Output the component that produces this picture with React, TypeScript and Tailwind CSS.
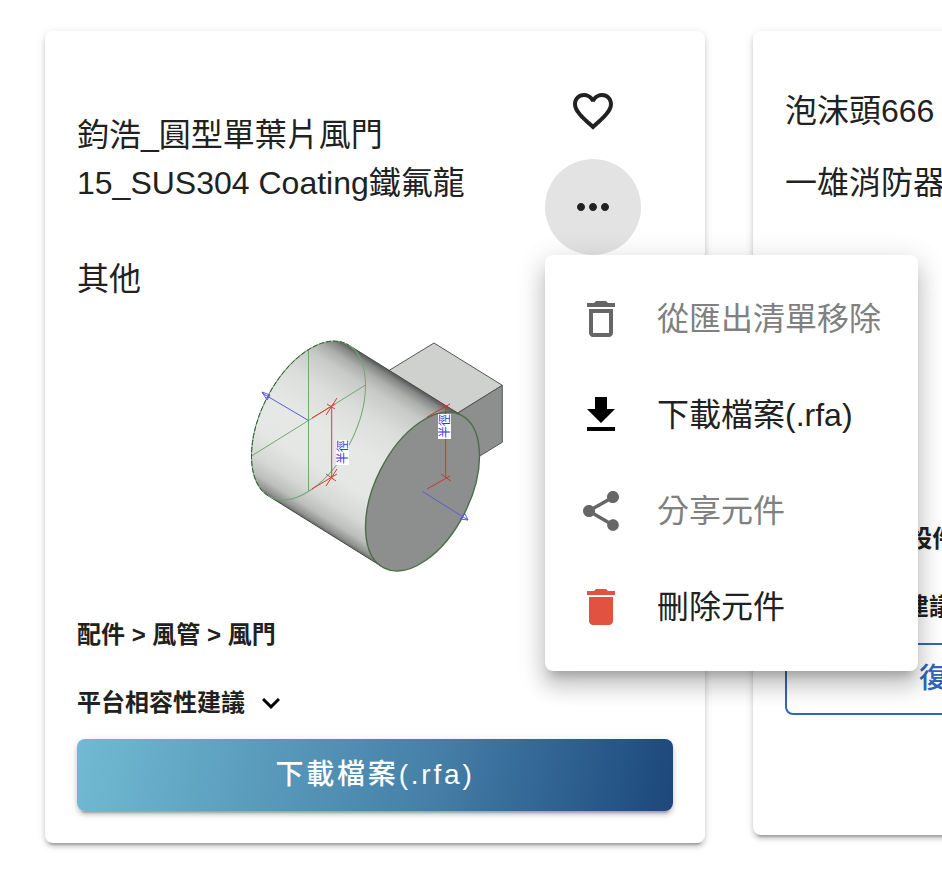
import type { ReactNode } from 'react'
import {
  MdDelete,
  MdExpandMore,
  MdFavoriteBorder,
  MdMoreHoriz,
  MdShare,
} from 'react-icons/md'

const CARD_SHADOW =
  'shadow-[0_6px_2px_-4px_rgba(0,0,0,0.2),0_4px_4px_0_rgba(0,0,0,0.14),0_2px_10px_0_rgba(0,0,0,0.12)]'
const MENU_SHADOW =
  'shadow-[0_10px_10px_-6px_rgba(0,0,0,0.2),0_16px_20px_2px_rgba(0,0,0,0.14),0_6px_28px_4px_rgba(0,0,0,0.12)]'

function DeleteOutlineIcon() {
  return (
    <svg viewBox="0 0 24 24" className="size-12 fill-current" aria-hidden="true">
      <path d="M6 19c0 1.1.9 2 2 2h8c1.1 0 2-.9 2-2V7H6v12zM8 9h8v10H8V9zm7.5-5l-1-1h-5l-1 1H5v2h14V4h-3.5z" />
    </svg>
  )
}

function DownloadIcon() {
  return (
    <svg viewBox="0 0 24 24" className="size-12 fill-current" aria-hidden="true">
      <path d="M19 9h-4V3H9v6H5l7 7 7-7zM5 18v2h14v-2H5z" />
    </svg>
  )
}

interface MenuItemProps {
  icon: ReactNode
  label: string
  iconColor: string
  disabled?: boolean
}

function MenuItem({ icon, label, iconColor, disabled = false }: MenuItemProps) {
  return (
    <button
      type="button"
      role="menuitem"
      disabled={disabled}
      className="flex h-24 w-full items-center gap-8 px-8 text-left text-[32px] leading-[48px] whitespace-nowrap"
    >
      <span className={iconColor}>{icon}</span>
      <span className={disabled ? 'text-[#808080]' : 'text-[#212121]'}>{label}</span>
    </button>
  )
}

function ComponentMenu() {
  return (
    <div
      role="menu"
      className={`absolute top-full left-0 z-10 w-[373px] rounded-lg bg-white py-4 ${MENU_SHADOW}`}
    >
      <MenuItem icon={<DeleteOutlineIcon />} label="從匯出清單移除" iconColor="text-[#666666]" disabled />
      <MenuItem icon={<DownloadIcon />} label="下載檔案(.rfa)" iconColor="text-black" />
      <MenuItem icon={<MdShare className="size-12" />} label="分享元件" iconColor="text-[#666666]" disabled />
      <MenuItem icon={<MdDelete className="size-12" />} label="刪除元件" iconColor="text-[#e25241]" />
    </div>
  )
}

// Round damper: a cylinder seen in isometric view with its actuator box behind it
function DamperPreview() {
  return (
    <svg viewBox="225 327 300 258" className="h-[258px] w-[300px]" role="img" aria-label="圓型單葉片風門">
      <defs>
        <linearGradient id="barrel" gradientUnits="userSpaceOnUse" x1="348.6" y1="345.2" x2="258.4" y2="490">
          <stop offset="0" stopColor="#565857" />
          <stop offset="0.03" stopColor="#858786" />
          <stop offset="0.08" stopColor="#adafad" />
          <stop offset="0.15" stopColor="#c8cac8" />
          <stop offset="0.3" stopColor="#dbdedb" />
          <stop offset="0.5" stopColor="#e5e8e5" />
          <stop offset="0.7" stopColor="#e4e7e4" />
          <stop offset="0.84" stopColor="#d6d8d6" />
          <stop offset="0.93" stopColor="#bcbebc" />
          <stop offset="0.98" stopColor="#8f918f" />
          <stop offset="1" stopColor="#666866" />
        </linearGradient>
      </defs>

      <g stroke="#555756" strokeWidth="1" strokeLinejoin="round">
        <path d="M434 343L502.3 385.3L457.5 413L380 376Z" fill="#cfd1cf" />
        <path d="M502.3 385.3V442.3L470 462L450 418Z" fill="#8d8f8e" />
      </g>

      <path
        d="M348.8 345.2L462.8 416.2L382.2 566.8L268.2 495.8A85.5 47.3 -63.5 0 1 251.5 456A85.5 47.3 -63.5 0 1 348.8 345.2Z"
        fill="url(#barrel)"
      />
      <path d="M348.8 345.2L462.8 416.2M268.2 495.8L382.2 566.8" stroke="#454746" />

      <g fill="none" stroke="#6fa96f" strokeWidth="1">
        <ellipse rx="85.5" ry="47.3" transform="translate(308.5 420.5) rotate(-63.5)" />
        <path d="M308.5 349.5V491.5M251.5 456L365.5 385" />
      </g>
      <ellipse
        rx="85.5"
        ry="47.3"
        transform="translate(422.5 491.5) rotate(-63.5)"
        fill="#8d8f8e"
        stroke="#4a6f47"
        strokeWidth="1.4"
      />
      <path
        d="M268.2 495.8A85.5 47.3 -63.5 0 1 251.5 456A85.5 47.3 -63.5 0 1 348.8 345.2"
        fill="none"
        stroke="#33552f"
        strokeDasharray="5 2"
      />

      <g fill="none" stroke="#e0352f" strokeWidth="1">
        <path d="M331.7 406V478M312 418L335 404M326 415L337 398M327 404L335 409" />
        <path d="M312 489L337 474M326 486L337 469M326 474L336 481" />
      </g>
      <g fill="none" stroke="#c23a36" strokeWidth="1">
        <path d="M445.7 406V477.5M427 417L450 404M440 403L451 409" />
        <path d="M427 489L450 476M441 474L451 481" />
      </g>

      <g fill="none" stroke="#5a5ae0" strokeWidth="1">
        <path d="M308.5 420.5L262 393M262 392L270 395L267 400Z" />
        <path d="M422.5 491.5L468 520M468 520L465 514L460 519Z" />
      </g>

      <rect x="336" y="440" width="13" height="25" fill="#fff" />
      <rect x="438" y="414" width="13" height="25" fill="#fff" />
      <g fill="#3434e8" fontSize="12">
        <text transform="translate(347 464) rotate(-90)">半徑</text>
        <text transform="translate(449 438) rotate(-90)">半徑</text>
      </g>
    </svg>
  )
}

function CompatibilityToggle() {
  return (
    <button type="button" className="mt-8 flex items-center gap-2 text-2xl leading-9 font-bold whitespace-nowrap">
      平台相容性建議
      <MdExpandMore className="size-9 text-black" />
    </button>
  )
}

function DamperCard() {
  return (
    <article className={`w-[660px] shrink-0 rounded-lg bg-white p-8 ${CARD_SHADOW}`}>
      <header className="flex items-start pr-8">
        <div className="flex-1 pt-12 text-[32px] leading-[48px]">
          <h2>鈞浩_圓型單葉片風門 15_SUS304 Coating鐵氟龍</h2>
          <p className="mt-12">其他</p>
        </div>
        <div className="flex flex-col">
          <button type="button" aria-label="收藏" className="flex size-24 items-center justify-center rounded-full">
            <MdFavoriteBorder className="size-12" />
          </button>
          <div className="relative">
            <button
              type="button"
              aria-label="更多"
              aria-haspopup="menu"
              aria-expanded="true"
              className="flex size-24 items-center justify-center rounded-full bg-[#e3e3e3]"
            >
              <MdMoreHoriz className="size-12" />
            </button>
            <ComponentMenu />
          </div>
        </div>
      </header>
      <div className="mt-6 flex justify-center">
        <DamperPreview />
      </div>
      <p className="mt-8 text-2xl leading-9 font-bold">配件 &gt; 風管 &gt; 風門</p>
      <CompatibilityToggle />
      <button
        type="button"
        className={`mt-[18px] h-[72px] w-full rounded-lg bg-linear-100 from-[#71bad3] via-[#457fa7] via-60% to-[#1c477c] text-[28px] font-medium tracking-widest text-white ${CARD_SHADOW}`}
      >
        下載檔案(.rfa)
      </button>
    </article>
  )
}

function SprinklerCard() {
  return (
    <article className={`w-[660px] shrink-0 rounded-lg bg-white px-8 pt-14 pb-[120px] ${CARD_SHADOW}`}>
      <header className="text-[32px] leading-[48px] whitespace-nowrap">
        <h2>泡沫頭666</h2>
        <p className="mt-6">一雄消防器</p>
      </header>
      <div className="mt-6 h-[258px]" />
      <p className="mt-8 text-2xl leading-9 font-bold whitespace-nowrap">消防 &gt; 消防設件</p>
      <CompatibilityToggle />
      <button
        type="button"
        className="mt-[18px] h-[72px] w-full rounded-lg border-2 border-[#3068b8] pl-[132px] text-left text-[28px] font-medium tracking-widest text-[#3068b8]"
      >
        復
      </button>
    </article>
  )
}

export default function App() {
  return (
    <main
      lang="zh-Hant"
      className="flex min-h-screen items-start gap-12 overflow-hidden bg-white pt-[31px] pb-8 pl-[45px] font-['Liberation_Sans','Noto_Sans_CJK_TC',sans-serif] text-[#212121]"
    >
      <DamperCard />
      <SprinklerCard />
    </main>
  )
}
